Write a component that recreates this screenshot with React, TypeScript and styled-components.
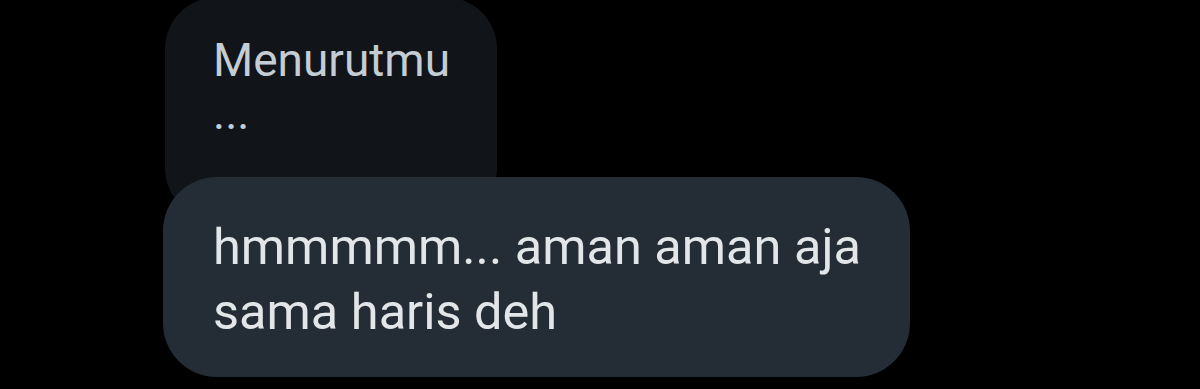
import React from "react";
import styled, { createGlobalStyle } from "styled-components";

const GlobalStyle = createGlobalStyle`
  html, body {
    margin: 0;
    padding: 0;
    background: #000;
    overflow: hidden;
  }
  body {
    font-family: Roboto, "Noto Sans", "Liberation Sans", sans-serif;
  }
`;

const Screen = styled.div`
  width: 1200px;
  height: 389px;
  background: #000;
  overflow: hidden;
  display: flex;
  flex-direction: column;
  align-items: flex-start;
  padding-left: 163px;
  box-sizing: border-box;
`;

const QuotedBubble = styled.div`
  margin-top: -3px;
  margin-left: 2px;
  width: 332px;
  box-sizing: border-box;
  padding: 37px 40px 80px 48px;
  background: #111418;
  border-radius: 52px;
  color: #c4ccd4;
  font-size: 46px;
  line-height: 53px;
`;

const ReplyBubble = styled.div`
  position: relative;
  margin-top: -43px;
  width: 747px;
  box-sizing: border-box;
  padding: 37px 40px 33px 50px;
  background: #242d35;
  border-radius: 54px;
  color: #e3e6e8;
  font-size: 50.5px;
  line-height: 65px;
`;

const Line = styled.div`
  white-space: nowrap;
`;

export default function App() {
  return (
    <>
      <GlobalStyle />
      <Screen>
        <QuotedBubble>
          <Line>Menurutmu</Line>
          <Line>...</Line>
        </QuotedBubble>
        <ReplyBubble>
          <Line>hmmmmm... aman aman aja</Line>
          <Line>sama haris deh</Line>
        </ReplyBubble>
      </Screen>
    </>
  );
}
